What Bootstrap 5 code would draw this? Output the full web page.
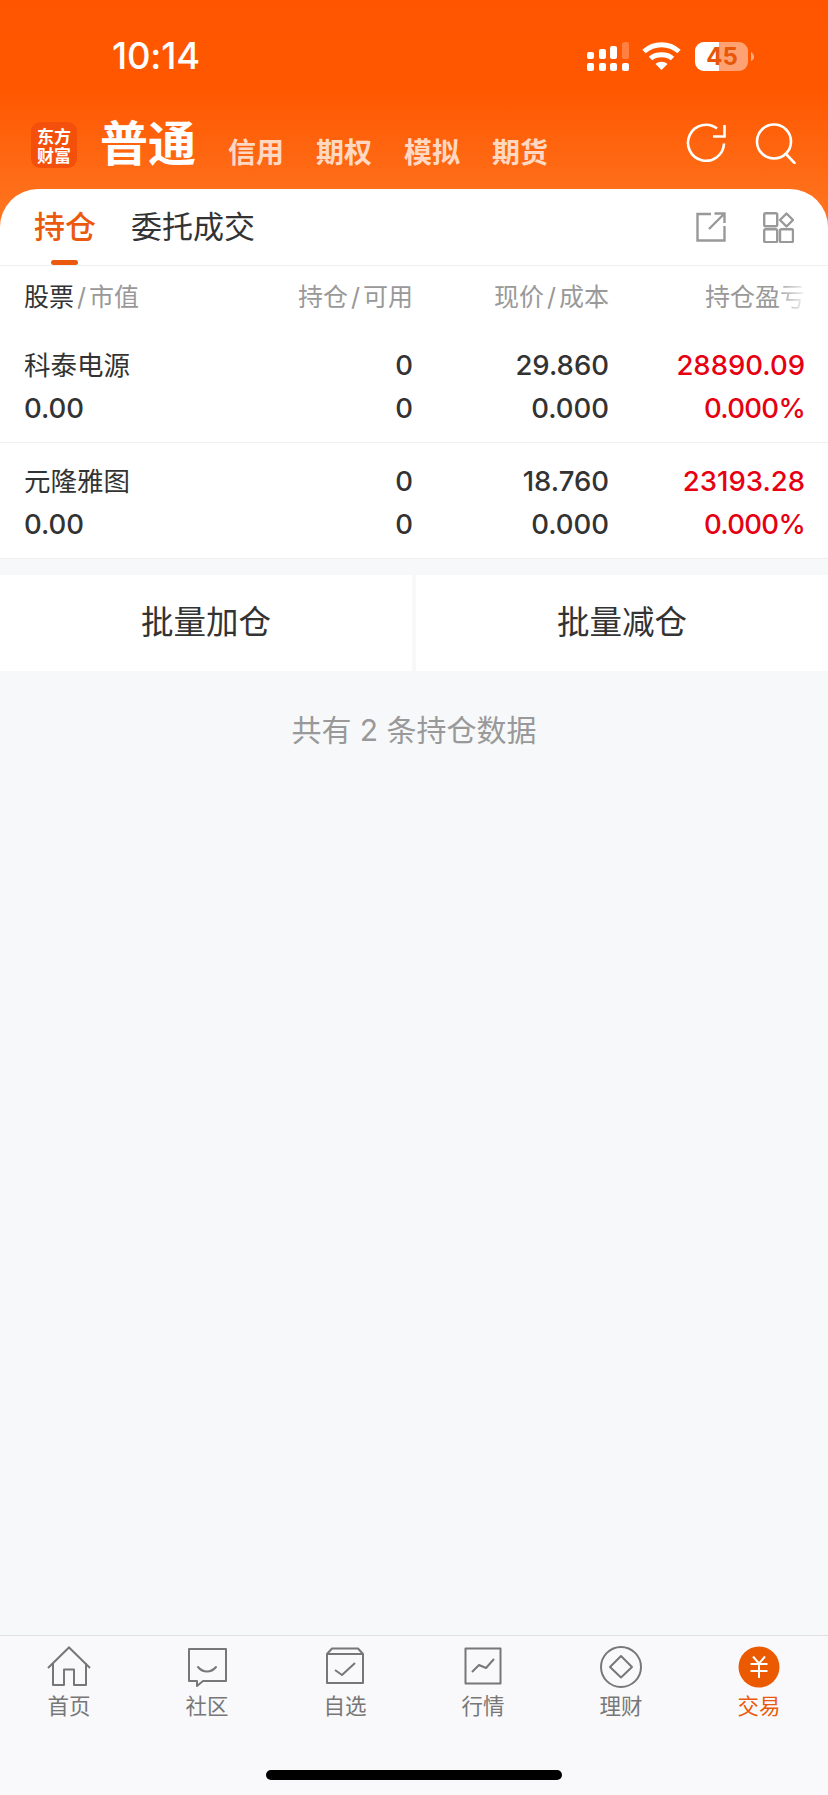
<!DOCTYPE html>
<html lang="zh">
<head>
<meta charset="utf-8">
<title>交易</title>
<link href="https://cdn.jsdelivr.net/npm/bootstrap@5.3.0/dist/css/bootstrap.min.css" rel="stylesheet">
<style>
html,body{height:100%;}
body{font-family:Inter,"Noto Sans CJK SC",sans-serif;background:#f7f8fa;color:#333;width:828px;height:1795px;overflow:hidden;}
.app-shell{height:1795px;}
.hero{height:232px;background:linear-gradient(180deg,#ff5500 0,#ff5700 38%,#ff7824 100%);}
.status-row{height:110px;padding:4px 73px 0 112px;}
.clock{font-size:36.5px;font-weight:500;color:#fff;line-height:1;margin-top:-2px;letter-spacing:-.2px;}
.nav-row{height:79px;padding:0 32px 0 31px;position:relative;}
.logo-tile{width:46px;height:46px;border-radius:9px;background:#f4500c;color:#fff;font-size:17px;line-height:19px;font-weight:700;text-align:center;padding-top:4px;margin-top:12px;font-family:"Noto Sans CJK SC",serif;}
.acct-main{font-size:48px;line-height:56px;font-weight:700;color:#fff;margin-left:23px;margin-right:32px;margin-top:6px;}
.acct-item{font-size:28px;line-height:40px;font-weight:700;color:rgba(255,255,255,.76);margin-right:32px;margin-top:23px;}
.head-icons{margin-left:auto;gap:28px;margin-top:13px;}
.sheet{margin-top:-43px;background:#fff;border-radius:38px 38px 0 0;position:relative;}
.tab-row{height:77px;padding:0 34px 0 34px;border-bottom:1px solid #eeeff1;}
.tab-on{font-size:31px;font-weight:500;color:#eb5a0c;position:relative;line-height:76px;margin-right:35px;}
.tab-on::after{content:"";position:absolute;left:17px;bottom:0;width:27px;height:5px;border-radius:3px;background:#eb5a0c;}
.tab-off{font-size:31px;font-weight:400;color:#333;line-height:76px;}
.col-name{width:168px;}
.col-mid{width:221px;text-align:right;}
.col-wide{width:196px;text-align:right;}
.col-head{height:62px;padding:2px 23px 0 24px;font-size:25px;color:#999;align-items:center;}
.col-head .dark-part{color:#333;}
.col-head .sep-mark{margin:0 3px;}
.fade-part{background:linear-gradient(90deg,#a8a8a8,#f2f2f2);-webkit-background-clip:text;background-clip:text;color:transparent;}
.stock-row{height:116px;padding:17px 23px 0 24px;border-bottom:1px solid #eeeff1;}
.stock-row.first-row{height:115px;padding-top:16px;}
.line-a,.line-b{height:43px;line-height:43px;}
.txt-cn{font-size:26.500px;font-weight:400;}
.txt-num{font-size:27.500px;font-weight:500;color:#333;}
.txt-up{color:#e60012;}
.txt-pct{letter-spacing:-.7px;}
.bulk-row{margin-top:16px;gap:4px;}
.bulk-btn{flex:1;height:96px;background:#fff;border:0;border-radius:0;font-size:32.500px;color:#333;padding:0;}
.bulk-btn:hover{background:#fff;color:#333;}
.count-line{margin-top:36px;text-align:center;color:#999;font-size:30px;line-height:46px;}
.tabbar{position:absolute;left:0;right:0;top:1635px;height:160px;background:#f9f9fb;border-top:1px solid #dfe0e2;}
.tab-cell{width:138px;text-align:center;color:#777;font-size:21.500px;line-height:28px;padding-top:10px;}
.tab-cell svg{display:block;margin:0 auto 4px;}
.tab-cell.is-on{color:#eb5a0c;}
.home-bar{position:absolute;left:266px;top:1770px;width:296px;height:10px;border-radius:5px;background:#000;}
</style>
</head>
<body>
<div class="app-shell position-relative">
  <header class="hero">
    <div class="status-row d-flex align-items-center justify-content-between">
      <div class="clock">10:14</div>
      <svg width="168" height="30" viewBox="0 0 168 30">
        <g fill="#fff">
          <rect x="0" y="21" width="7" height="8" rx="2"/><rect x="12" y="21" width="7" height="8" rx="2"/><rect x="23" y="21" width="7" height="8" rx="2"/><rect x="35" y="21" width="7" height="8" rx="2"/>
          <rect x="0" y="10" width="7" height="7" rx="2"/><rect x="12" y="7" width="7" height="10" rx="2"/><rect x="23" y="4" width="7" height="13" rx="2"/>
          <rect x="35" y="0" width="7" height="17" rx="2" opacity=".25"/>
        </g>
        <path d="M57 9.500C67 .5 82 .5 92 9.500" fill="none" stroke="#fff" stroke-width="5"/>
        <path d="M63.500 16.500C69 11.500 80 11.500 85.500 16.500" fill="none" stroke="#fff" stroke-width="5"/>
        <path d="M74.500 28L68.500 22C72 19 77 19 80.500 22Z" fill="#fff"/>
        <rect x="108" y="0" width="53" height="29" rx="9" fill="#fff" opacity=".45"/>
        <path d="M117 0H132V29H117A9 9 0 0 1 108 20V9A9 9 0 0 1 117 0Z" fill="#fff"/>
        <path d="M164 10C166 11 167 13 167 15S166 18 164 19Z" fill="#fff" opacity=".5"/>
        <text x="135" y="23" text-anchor="middle" font-family="Inter,sans-serif" font-size="24" font-weight="700" fill="#e85608">45</text>
      </svg>
    </div>
    <div class="nav-row d-flex align-items-start">
      <div class="logo-tile">东方<br>财富</div>
      <div class="acct-main">普通</div>
      <div class="acct-item">信用</div>
      <div class="acct-item">期权</div>
      <div class="acct-item">模拟</div>
      <div class="acct-item">期货</div>
      <div class="head-icons d-flex">
        <svg width="41" height="41" viewBox="0 0 41 41" fill="none" stroke="#fff" stroke-width="2.600"><path d="M38 20.500A18 18 0 1 1 31 5.500"/><path d="M38.500 2V13.500H27"/></svg>
        <svg width="41" height="41" viewBox="0 0 41 41" fill="none" stroke="#fff" stroke-width="2.600"><circle cx="19" cy="18.500" r="17"/><path d="M31 31L39.500 40" stroke-linecap="round"/></svg>
      </div>
    </div>
  </header>
  <main class="sheet">
    <div class="tab-row d-flex align-items-start">
      <div class="tab-on">持仓</div>
      <div class="tab-off">委托成交</div>
      <div class="ms-auto d-flex align-items-center" style="gap:37px;height:76px">
        <svg width="30" height="30" viewBox="0 0 30 30" fill="none" stroke="#999" stroke-width="2.400"><path d="M15 2H1.500V28.500H28.500V14"/><path d="M13 17L28 2M18.500 1.500H28.500V11"/></svg>
        <svg width="31" height="31" viewBox="0 0 31 31" fill="none" stroke="#999" stroke-width="2.400"><rect x="1.200" y="1.200" width="13" height="13" rx="1.500"/><rect x="1.200" y="17.200" width="13" height="13" rx="1.500"/><rect x="17" y="17.200" width="13" height="13" rx="1.500"/><path d="M23.500 1.500L30 8L23.500 14.500L17 8Z" stroke-linejoin="round"/></svg>
      </div>
    </div>
    <div class="col-head d-flex">
      <div class="col-name"><span class="dark-part">股票</span><span class="sep-mark">/</span>市值</div>
      <div class="col-mid">持仓<span class="sep-mark">/</span>可用</div>
      <div class="col-wide">现价<span class="sep-mark">/</span>成本</div>
      <div class="col-wide">持仓盈<span class="fade-part">亏</span></div>
    </div>
    <div class="stock-row first-row">
      <div class="d-flex line-a">
        <div class="col-name txt-cn">科泰电源</div><div class="col-mid txt-num">0</div><div class="col-wide txt-num">29.860</div><div class="col-wide txt-num txt-up">28890.09</div>
      </div>
      <div class="d-flex line-b">
        <div class="col-name txt-num">0.00</div><div class="col-mid txt-num">0</div><div class="col-wide txt-num">0.000</div><div class="col-wide txt-num txt-up txt-pct">0.000%</div>
      </div>
    </div>
    <div class="stock-row">
      <div class="d-flex line-a">
        <div class="col-name txt-cn">元隆雅图</div><div class="col-mid txt-num">0</div><div class="col-wide txt-num">18.760</div><div class="col-wide txt-num txt-up">23193.28</div>
      </div>
      <div class="d-flex line-b">
        <div class="col-name txt-num">0.00</div><div class="col-mid txt-num">0</div><div class="col-wide txt-num">0.000</div><div class="col-wide txt-num txt-up txt-pct">0.000%</div>
      </div>
    </div>
  </main>
  <div class="bulk-row d-flex">
    <button type="button" class="btn bulk-btn">批量加仓</button>
    <button type="button" class="btn bulk-btn">批量减仓</button>
  </div>
  <p class="count-line mb-0">共有 2 条持仓数据</p>
  <nav class="tabbar d-flex">
    <div class="tab-cell">
      <svg width="44" height="42" viewBox="0 0 44 42" fill="none" stroke="#777" stroke-width="2"><path d="M1 22L22 1.500L43 22"/><path d="M6 17V39H17V23.500H27V39H39V17" stroke-linejoin="round"/></svg>首页</div>
    <div class="tab-cell">
      <svg width="42" height="42" viewBox="0 0 42 42" fill="none" stroke="#777" stroke-width="2" stroke-linejoin="round"><path d="M3 3H40V35H17L11 40V35H3Z"/><path d="M12 21C17 27 25 27 30 21" stroke-linecap="round"/></svg>社区</div>
    <div class="tab-cell">
      <svg width="42" height="42" viewBox="0 0 42 42" fill="none" stroke="#777" stroke-width="2" stroke-linejoin="round"><path d="M3 8V37H39V8Z"/><path d="M3 8L8 2.500H34L39 8"/><path d="M11 24L18 29L31 17"/></svg>自选</div>
    <div class="tab-cell">
      <svg width="42" height="42" viewBox="0 0 42 42" fill="none" stroke="#777" stroke-width="2" stroke-linejoin="round"><rect x="3.500" y="2.500" width="35" height="35"/><path d="M10 26L17 19L24 22L32 13"/></svg>行情</div>
    <div class="tab-cell">
      <svg width="42" height="42" viewBox="0 0 42 42" fill="none" stroke="#777" stroke-width="2" stroke-linejoin="round"><circle cx="21" cy="21" r="20"/><path d="M21 10L32 21L21 31.500L10 21Z"/></svg>理财</div>
    <div class="tab-cell is-on">
      <svg width="42" height="42" viewBox="0 0 42 42"><circle cx="21" cy="21" r="20.500" fill="#eb5a00"/><path d="M15 10.500L21 17.500L27 10.500M12.500 18H29.500M12.500 25H29.500M21 18V32" fill="none" stroke="#fff" stroke-width="2"/></svg>交易</div>
  </nav>
  <div class="home-bar"></div>
</div>
<script src="https://cdn.jsdelivr.net/npm/bootstrap@5.3.0/dist/js/bootstrap.bundle.min.js"></script>
</body>
</html>
